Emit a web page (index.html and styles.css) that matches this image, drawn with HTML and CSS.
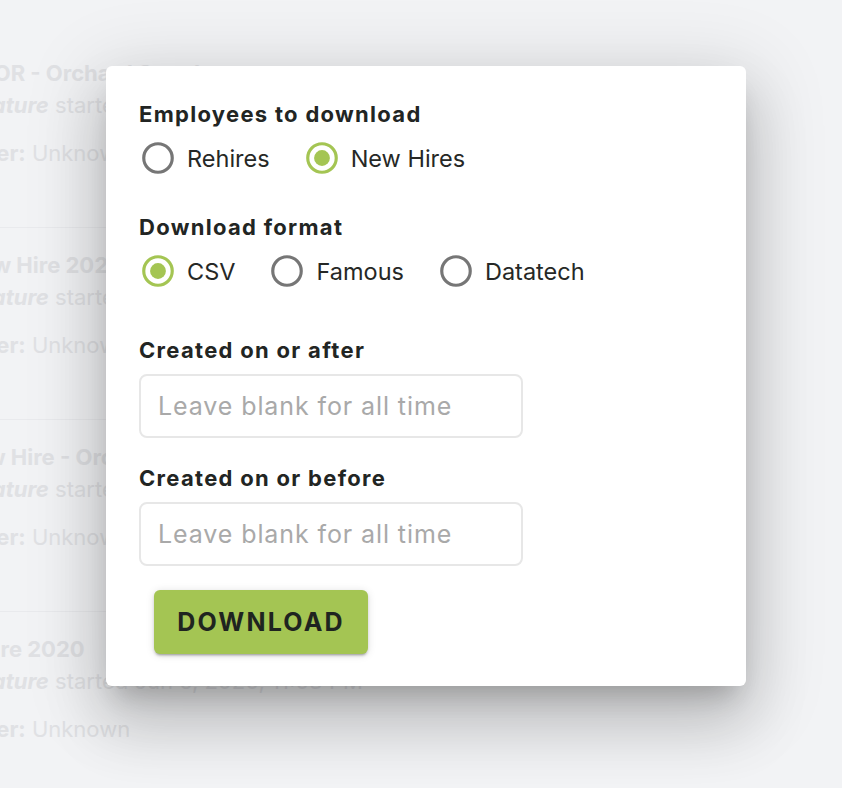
FILE: index.html
```html
<!DOCTYPE html>
<html lang="en">
<head>
  <meta charset="UTF-8">
  <title>Download employees</title>
  <link rel="stylesheet" href="styles.css">
</head>
<body>
  <ul class="uploads">
    <li class="upload">
      <div class="upload-title">Rehire OR - Orchard Supply</div>
      <div class="upload-line"><b><i>E-Signature</i></b> started Jun 5, 2020, 11:03 PM</div>
      <div class="upload-line upload-owner"><b>Uploader:</b> Unknown</div>
    </li>
    <li class="upload">
      <div class="upload-title">WA New Hire 2020</div>
      <div class="upload-line"><b><i>E-Signature</i></b> started Jun 5, 2020, 11:03 PM</div>
      <div class="upload-line upload-owner"><b>Uploader:</b> Unknown</div>
    </li>
    <li class="upload">
      <div class="upload-title">CA New Hire - Orchard Supply</div>
      <div class="upload-line"><b><i>E-Signature</i></b> started Jun 5, 2020, 11:03 PM</div>
      <div class="upload-line upload-owner"><b>Uploader:</b> Unknown</div>
    </li>
    <li class="upload">
      <div class="upload-title">All Rehire 2020</div>
      <div class="upload-line"><b><i>E-Signature</i></b> started Jun 5, 2020, 11:03 PM</div>
      <div class="upload-line upload-owner"><b>Uploader:</b> Unknown</div>
    </li>
  </ul>

  <form class="dialog" id="downloadForm">
    <div class="field-label">Employees to download</div>
    <div class="radio-group">
      <label class="radio">
        <input type="radio" name="employees" value="rehires">
        <svg class="radio-icon" viewBox="0 0 24 24"><circle class="ring" cx="12" cy="12" r="9"/><circle class="dot" cx="12" cy="12" r="5"/></svg>
        <span>Rehires</span>
      </label>
      <label class="radio">
        <input type="radio" name="employees" value="new" checked>
        <svg class="radio-icon" viewBox="0 0 24 24"><circle class="ring" cx="12" cy="12" r="9"/><circle class="dot" cx="12" cy="12" r="5"/></svg>
        <span>New Hires</span>
      </label>
    </div>

    <div class="field-label format-label">Download format</div>
    <div class="radio-group">
      <label class="radio">
        <input type="radio" name="format" value="csv" checked>
        <svg class="radio-icon" viewBox="0 0 24 24"><circle class="ring" cx="12" cy="12" r="9"/><circle class="dot" cx="12" cy="12" r="5"/></svg>
        <span>CSV</span>
      </label>
      <label class="radio">
        <input type="radio" name="format" value="famous">
        <svg class="radio-icon" viewBox="0 0 24 24"><circle class="ring" cx="12" cy="12" r="9"/><circle class="dot" cx="12" cy="12" r="5"/></svg>
        <span>Famous</span>
      </label>
      <label class="radio">
        <input type="radio" name="format" value="datatech">
        <svg class="radio-icon" viewBox="0 0 24 24"><circle class="ring" cx="12" cy="12" r="9"/><circle class="dot" cx="12" cy="12" r="5"/></svg>
        <span>Datatech</span>
      </label>
    </div>

    <label class="field-label date-label" for="after">Created on or after</label>
    <input class="date-input" type="text" id="after" placeholder="Leave blank for all time">

    <label class="field-label date-label second" for="before">Created on or before</label>
    <input class="date-input" type="text" id="before" placeholder="Leave blank for all time">

    <button type="submit" class="download-btn">Download</button>
  </form>
</body>
</html>
```

FILE: styles.css
```css
body {
  margin: 0;
  background-color: #f2f3f5;
  font-family: Inter, 'Noto Sans', sans-serif;
  height: 788px;
  overflow: hidden;
}

/* faded list behind the dialog */
.uploads {
  list-style: none;
  margin: 0 0 0 -80px;
  padding: 36px 0 0;
  width: 760px;
}

.upload {
  height: 192px;
  box-sizing: border-box;
  border-bottom: 1px solid #e9eaed;
  padding-top: 22px;
  color: #e0e1e4;
  font-size: 22px;
  white-space: nowrap;
}

.upload-title {
  font-weight: 700;
  line-height: 30px;
}

.upload-line {
  line-height: 30px;
  margin-top: 2px;
}

.upload-owner {
  margin-top: 18px;
}

/* dialog */
.dialog {
  position: absolute;
  left: 106px;
  top: 66px;
  width: 640px;
  box-sizing: border-box;
  padding: 33px 32px 32px 33px;
  background-color: #fff;
  border-radius: 6px;
  box-shadow: 0 18px 24px -11px rgba(0, 0, 0, 0.2),
              0 38px 61px 5px rgba(0, 0, 0, 0.14),
              0 14px 74px 13px rgba(0, 0, 0, 0.12);
  display: flex;
  flex-direction: column;
  align-items: flex-start;
}

.field-label {
  display: block;
  font-size: 22px;
  line-height: 30px;
  font-weight: 700;
  letter-spacing: 1.3px;
  color: #222523;
}

.format-label {
  margin-top: 32px;
}

.radio-group {
  display: flex;
  gap: 33px;
  height: 44px;
  margin-top: 7px;
}

.radio {
  display: flex;
  align-items: center;
  font-size: 23.5px;
  color: #262826;
  cursor: pointer;
}

.radio input {
  display: none;
}

.radio-icon {
  width: 38px;
  height: 38px;
  margin-right: 10px;
}

.radio-icon .ring {
  fill: none;
  stroke: #767676;
  stroke-width: 2;
}

.radio-icon .dot {
  fill: #a4c553;
  transform: scale(0);
  transform-origin: 12px 12px;
}

.radio input:checked + .radio-icon .ring {
  stroke: #a4c553;
}

.radio input:checked + .radio-icon .dot {
  transform: scale(1);
}

.date-label {
  margin-top: 42px;
}

.date-label.second {
  margin-top: 25px;
}

.date-input {
  margin-top: 9px;
  width: 384px;
  height: 64px;
  box-sizing: border-box;
  border: 2px solid #e7e7e7;
  border-radius: 8px;
  padding: 0 17px;
  font-family: inherit;
  font-size: 25px;
  letter-spacing: 0.9px;
  color: #222;
  outline: none;
}

.date-input::placeholder {
  color: #a9a9a9;
}

.download-btn {
  margin: 24px 0 0 15px;
  width: 214px;
  height: 64px;
  padding: 0;
  border: none;
  border-radius: 6px;
  background-color: #a4c553;
  color: #1f2420;
  font-family: inherit;
  font-size: 25px;
  font-weight: 700;
  letter-spacing: 2.2px;
  text-transform: uppercase;
  cursor: pointer;
  box-shadow: 0 3px 2px -2px rgba(0, 0, 0, 0.2),
              0 2px 3px rgba(0, 0, 0, 0.14),
              0 1px 8px rgba(0, 0, 0, 0.12);
}
```
